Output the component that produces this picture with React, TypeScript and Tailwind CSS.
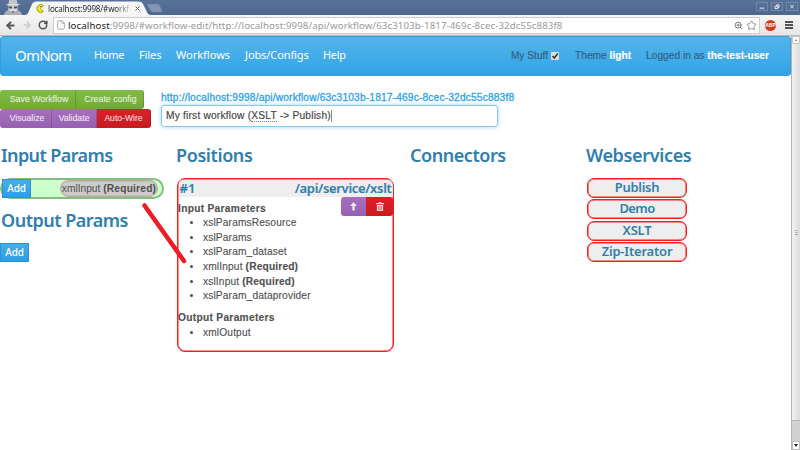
import React from "react";
import { ArrowLeft, ArrowRight, RotateCw, Star, ZoomIn, File } from "lucide-react";

const font = "font-['Noto_Sans',sans-serif] font-semibold text-[#317eac] whitespace-nowrap";
const heading = `${font} h-[24px] text-[18px] leading-[23px]`;

function Incognito() {
  return (
    <svg viewBox="0 0 20 16" className="h-[15px] w-[20px]">
      <path d="M0 16 Q2 10.500 7 10 L13 10 Q18 10.500 20 16 Z" fill="#aab0b8" />
      <path d="M5 6 H15 V10 Q10 16 5 10 Z" fill="#d8dadd" />
      <path d="M6 0 H14 L15 4 H5 Z" fill="#c3c6cb" />
      <path d="M2 5 Q10 2.500 18 5 Q10 7.500 2 5Z" fill="#dfe1e4" />
      <path d="M5 7 H9 V9 H6 Z M11 7 H15 L14 9 H11 Z" fill="#46494f" />
      <path d="M8 12 H12 L10 14Z" fill="#666b73" />
    </svg>
  );
}

function TitleBar() {
  return (
    <div className="relative flex h-[15px] items-end bg-linear-to-b from-[#587399] to-[#4e678c]">
      <div className="ml-[3px] w-[20px]"><Incognito /></div>
      <svg viewBox="0 0 142 15" className="absolute left-[24px] top-0 h-[15px] w-[142px]">
        <path d="M1 15 Q4 14.500 5 11 L8 4 Q9 1.500 12 1.500 H115 Q118 1.500 119 4 L123 12 Q124 15 127 15 Z" fill="#f6f6f7" />
        <path d="M124 4 H133 Q135 4 136 6 L138 11 Q138 12 137 12 H129 Q127 12 126 10 L123.500 5 Q123.500 4 124 4Z" fill="#8495b3" stroke="#6f82a3" strokeWidth=".5" />
      </svg>
      <div className="relative ml-[13px] flex h-[13px] w-[106px] items-center">
        <svg viewBox="0 0 9 9" className="h-[9px] w-[9px] shrink-0">
          <path d="M7.500 1.500 A4 4 0 1 0 7.500 7.500 L4.500 4.500 Z" fill="#f8ee00" stroke="#77751b" strokeWidth=".7" />
          <circle cx="4.500" cy="2.500" r=".6" fill="#333" />
        </svg>
        <span className="ml-[3px] w-[83px] shrink-0 whitespace-nowrap bg-linear-to-r from-[#222] from-80% to-[#ddd] bg-clip-text font-['Noto_Sans',sans-serif] text-[8px] leading-[13px] tracking-[-0.14px] text-transparent">localhost:9998/#workf</span>
        <svg viewBox="0 0 5 5" className="ml-[4px] h-[5px] w-[5px] shrink-0"><path d="M.5 .5 L4.500 4.500 M4.500 .5 L.5 4.500" stroke="#666" strokeWidth="1" /></svg>
      </div>
      <div className="ml-auto mr-[2px] flex h-[13px] items-start gap-[3px]">
        {["M3 6 H9", "M3.500 3.700 H7 V6.500 H3.500Z M5.500 3.500 V2 H8.500 V5 H7", "M4 2.200 L8 6.200 M8 2.200 L4 6.200"].map((d) => (
          <svg key={d} viewBox="0 0 12 8" className="h-[9px] w-[12px] border border-[#7389aa]"><path d={d} stroke="#f4f6fa" strokeWidth="1.100" fill="none" /></svg>
        ))}
      </div>
    </div>
  );
}

function Toolbar() {
  return (
    <div className="flex h-[21px] items-center border-b border-[#b9b9b9] bg-linear-to-b from-[#f6f6f7] to-[#e6e6e6]">
      <ArrowLeft className="ml-[5px] h-[11px] w-[11px] text-[#555]" strokeWidth={4} />
      <ArrowRight className="ml-[6px] h-[10px] w-[10px] text-[#c9c9c9]" strokeWidth={3.5} />
      <RotateCw className="ml-[6px] h-[10px] w-[10px] text-[#555]" strokeWidth={3.8} />
      <div className="ml-[5px] flex h-[17px] w-[707px] items-center border border-[#cdcdcd] bg-white">
        <File className="ml-[2px] h-[10px] w-[10px] text-[#999]" strokeWidth={2} />
        <span className="ml-[2px] whitespace-nowrap font-['Noto_Sans',sans-serif] text-[9.7px] leading-[15px] tracking-[0.09px] text-[#999]">
          <span className="text-[#222]">localhost</span>:9998/#workflow-edit/http://localhost:9998/api/workflow/63c3103b-1817-469c-8cec-32dc55c883f8
        </span>
        <ZoomIn className="ml-auto h-[9px] w-[9px] text-[#777]" strokeWidth={2.6} />
        <Star className="ml-[3px] mr-[2px] h-[11px] w-[11px] text-[#888]" strokeWidth={2} />
      </div>
      <div className="ml-[5px] flex h-[11px] w-[11px] items-center justify-center rounded-full bg-[#d63a1c] font-['Liberation_Sans',sans-serif] text-[5px] font-bold leading-none text-white">ABP</div>
      <div className="ml-[9px] flex w-[8px] flex-col gap-[1px]">
        <i className="h-[2px] bg-[#555]" /><i className="h-[2px] bg-[#555]" /><i className="h-[2px] bg-[#555]" />
      </div>
    </div>
  );
}

function Navbar() {
  return (
    <nav className="flex h-[40px] items-center whitespace-nowrap rounded-[3px] border border-[#3d9cd6] bg-linear-to-b from-[#54b4eb] to-[#2fa4e7] font-['Noto_Sans',sans-serif] text-[11px] text-white">
      <span className="ml-[14px] mt-[-1px] w-[79px] text-[15px] tracking-[-0.8px]">OmNom</span>
      <span className="mt-[-1px] w-[45px] tracking-[-0.3px]">Home</span>
      <span className="mt-[-1px] w-[37px] tracking-[-0.1px]">Files</span>
      <span className="mt-[-1px] w-[69px]">Workflows</span>
      <span className="mt-[-1px] w-[78px] tracking-[-0.1px]">Jobs/Configs</span>
      <span className="mt-[-1px] tracking-[-0.3px]">Help</span>
      <div className="ml-auto mr-[21px] flex items-center font-['Liberation_Sans',sans-serif] text-[10.2px] text-[#315f7d] [-webkit-text-stroke:0.15px]">
        <span>My Stuff</span>
        <svg viewBox="0 0 8 8" className="ml-[3px] h-[8px] w-[8px] rounded-[1px] bg-[#ddd]"><path d="M1.500 4 L3.300 6 L6.800 1.500" stroke="#333" strokeWidth="1.500" fill="none" /></svg>
        <span className="ml-[16px]">Theme <b className="text-white">light</b></span>
        <span className="ml-[15px]">Logged in as <b className="text-white">the-test-user</b></span>
      </div>
    </nav>
  );
}

function Actions() {
  const btn = "flex h-[19px] items-center justify-center border-r border-black/15 text-white/90";
  return (
    <div className="w-[161px] pt-[14px] text-[8.8px] whitespace-nowrap">
      <div className="flex">
        <div className={`${btn} w-[76px] rounded-tl-[3px] bg-linear-to-b from-[#80bd44] to-[#73a839] pl-[3px]`}>Save Workflow</div>
        <div className={`${btn} w-[68px] rounded-r-[3px] bg-linear-to-b from-[#80bd44] to-[#73a839] pl-[2px]`}>Create config</div>
      </div>
      <div className="flex">
        <div className={`${btn} w-[52px] rounded-l-[3px] bg-linear-to-b from-[#a770be] to-[#9760b2] pl-[3px]`}>Visualize</div>
        <div className={`${btn} w-[45px] bg-linear-to-b from-[#a770be] to-[#9760b2]`}>Validate</div>
        <div className={`${btn} w-[54px] rounded-r-[3px] bg-linear-to-b from-[#dc2027] to-[#c71c22] text-[8.6px]`}>Auto-Wire</div>
      </div>
    </div>
  );
}

function AddButton() {
  return <div className="flex h-[19px] w-[29px] shrink-0 items-center justify-center border border-[#2b94d2] bg-linear-to-b from-[#46aeea] to-[#2b9fe3] font-['Noto_Sans',sans-serif] text-[10px] font-medium tracking-[-0.15px] text-white">Add</div>;
}

function Param({ name, required }: { name: string; required?: boolean }) {
  return <li className="h-[14.65px]">{name}{required && <b className="tracking-[0.16px]"> (Required)</b>}</li>;
}

function PositionCard() {
  return (
    <div className="ml-[1px] mt-[10px] h-[174px] w-[217px] overflow-hidden rounded-[8px] border border-[#ff1a1a] text-[10.2px] leading-[14.65px] tracking-[0.14px] shadow-[inset_0_0_0_0.5px_#ff1a1a] [-webkit-text-stroke:0.12px]">
      <div className={`${font} mx-[0.5px] mt-[0.5px] flex h-[17.500px] items-center justify-between bg-[#eee] pl-[1px] pr-[1px] text-[13px] leading-[16px]`}>
        <span>#1</span><span className="tracking-[-0.32px]">/api/service/xslt</span>
      </div>
      <div className="flex justify-between">
        <b className="mt-[4.500px] tracking-[0.3px]">Input Parameters</b>
        <div className="flex h-[19px] overflow-hidden rounded-[3px]">
          <div className="flex w-[25px] items-center justify-center bg-linear-to-b from-[#a770be] to-[#9760b2]">
            <svg viewBox="0 0 8 10" className="h-[9px] w-[7px]"><path d="M4 0 L8 4.500 H5.300 V9.500 H2.700 V4.500 H0Z" fill="#f3e9f7" /></svg>
          </div>
          <div className="flex w-[27px] items-center justify-center bg-linear-to-b from-[#dc2027] to-[#c71c22]">
            <svg viewBox="0 0 9 10" className="h-[9px] w-[8px]"><path d="M3 0 H6 V1 H9 V2.400 H0 V1 H3Z M1 3.300 H8 V10 H1Z" fill="#f6d5d6" /><path d="M3 4.500 V9 M4.500 4.500 V9 M6 4.500 V9" stroke="#d02027" strokeWidth=".6" /></svg>
          </div>
        </div>
      </div>
      <ul className="list-disc pl-[25px]">
        <Param name="xslParamsResource" />
        <Param name="xslParams" />
        <Param name="xslParam_dataset" />
        <Param name="xmlInput" required />
        <Param name="xslInput" required />
        <Param name="xslParam_dataprovider" />
      </ul>
      <b className="mt-[7px] block tracking-[0.3px]">Output Parameters</b>
      <ul className="list-disc pl-[25px]"><Param name="xmlOutput" /></ul>
    </div>
  );
}

function Scrollbar() {
  return (
    <div className="flex w-[9px] flex-col border-l border-[#b5b5b5] bg-[#d2d2d2]">
      <div className="flex h-[8px] items-center justify-center rounded-[1px] border border-[#c4c4c4] bg-white"><svg viewBox="0 0 4 3" className="h-[2px] w-[4px]"><path d="M0 3 L2 0 L4 3Z" fill="#888" /></svg></div>
      <div className="flex h-[377px] flex-col items-center justify-center gap-[1px] border-b border-[#b5b5b5] bg-linear-to-r from-[#f1f1f1] to-[#dcdcdc]">
        <i className="h-px w-[3px] bg-[#bbb]" /><i className="h-px w-[3px] bg-[#bbb]" /><i className="h-px w-[3px] bg-[#aaa]" />
      </div>
      <div className="mt-auto flex h-[9px] items-center justify-center rounded-[1px] border border-[#bbb] bg-white"><svg viewBox="0 0 4 3" className="h-[3px] w-[4px]"><path d="M0 0 H4 L2 3Z" fill="#222" /></svg></div>
    </div>
  );
}

const services = [
  { name: "Publish", tracking: "tracking-[-0.3px]" },
  { name: "Demo", tracking: "tracking-[-0.6px]" },
  { name: "XSLT", tracking: "tracking-[-0.2px]" },
  { name: "Zip-Iterator", tracking: "tracking-[-0.2px]" },
];

export default function App() {
  return (
    <div className="relative flex h-[450px] w-[800px] flex-col overflow-hidden bg-white font-['Liberation_Sans',Arial,sans-serif] text-[#505050]">
      <TitleBar />
      <Toolbar />
      <div className="flex min-h-0 flex-1">
        <main className="w-[791px]">
          <Navbar />
          <div className="flex h-[68px]">
            <Actions />
            <div className="w-[337px] pt-[15px]">
              <div className="h-[14px] whitespace-nowrap text-[10.2px] leading-[14px] tracking-[0.165px] text-[#2fa4e7] [-webkit-text-stroke:0.3px]">http://localhost:9998/api/workflow/63c3103b-1817-469c-8cec-32dc55c883f8</div>
              <div className="flex h-[22px] items-center rounded-[3px] border border-[#8cc8f0] pl-[4px] text-[10.2px] tracking-[0.2px] shadow-[0_0_4px_#9fd3f5] [-webkit-text-stroke:0.15px]">
                <span className="text-[#444]">My first workflow (<span className="border-b border-dotted border-[#e55]">XSLT</span> -&gt; Publish)</span><i className="h-[12px] w-px bg-[#888]" />
              </div>
            </div>
          </div>
          <div className="flex">
            <section className="w-[176px]">
              <h3 className={`${heading} pl-px tracking-[-0.6px]`}>Input Params</h3>
              <div className="mt-[10px] flex h-[21px] w-[164px] items-center justify-between rounded-[11px] border-2 border-[#85bd85] bg-[#cfc] pr-[4px] text-[10.2px]">
                <AddButton />
                <div className="flex h-[17px] w-[98px] items-center justify-center whitespace-nowrap rounded-[9px] border border-[#c0aa96] bg-[#ccc] shadow-[inset_0_0_0_0.5px_#c0aa96]"><span>xmlInput <b className="tracking-[0.2px]">(Required)</b></span></div>
              </div>
              <h3 className={`${heading} mt-[10px] pl-px tracking-[-0.5px]`}>Output Params</h3>
              <div className="mt-[10px]"><AddButton /></div>
            </section>
            <section className="w-[234px]">
              <h3 className={`${heading} tracking-[-0.4px]`}>Positions</h3>
              <PositionCard />
            </section>
            <section className="w-[176px]"><h3 className={`${heading} tracking-[-0.45px]`}>Connectors</h3></section>
            <section>
              <h3 className={`${heading} tracking-[-0.35px]`}>Webservices</h3>
              <div className="ml-[1px] mt-[9.500px] flex w-[100px] flex-col gap-[1.500px]">
                {services.map(({ name, tracking }) => (
                  <div key={name} className={`${font} ${tracking} flex h-[20px] items-center justify-center rounded-[7px] border border-[#ff1a1a] bg-[#eee] pb-px text-[13px] leading-[17px] shadow-[inset_0_0_0_0.5px_#ff1a1a]`}>{name}</div>
                ))}
              </div>
            </section>
          </div>
        </main>
        <Scrollbar />
      </div>
      <svg viewBox="0 0 800 450" className="pointer-events-none absolute inset-0 h-[450px] w-[800px]"><path d="M144.500 205.500 L184 261" stroke="#ed1c24" strokeWidth="4.500" strokeLinecap="round" /></svg>
    </div>
  );
}
